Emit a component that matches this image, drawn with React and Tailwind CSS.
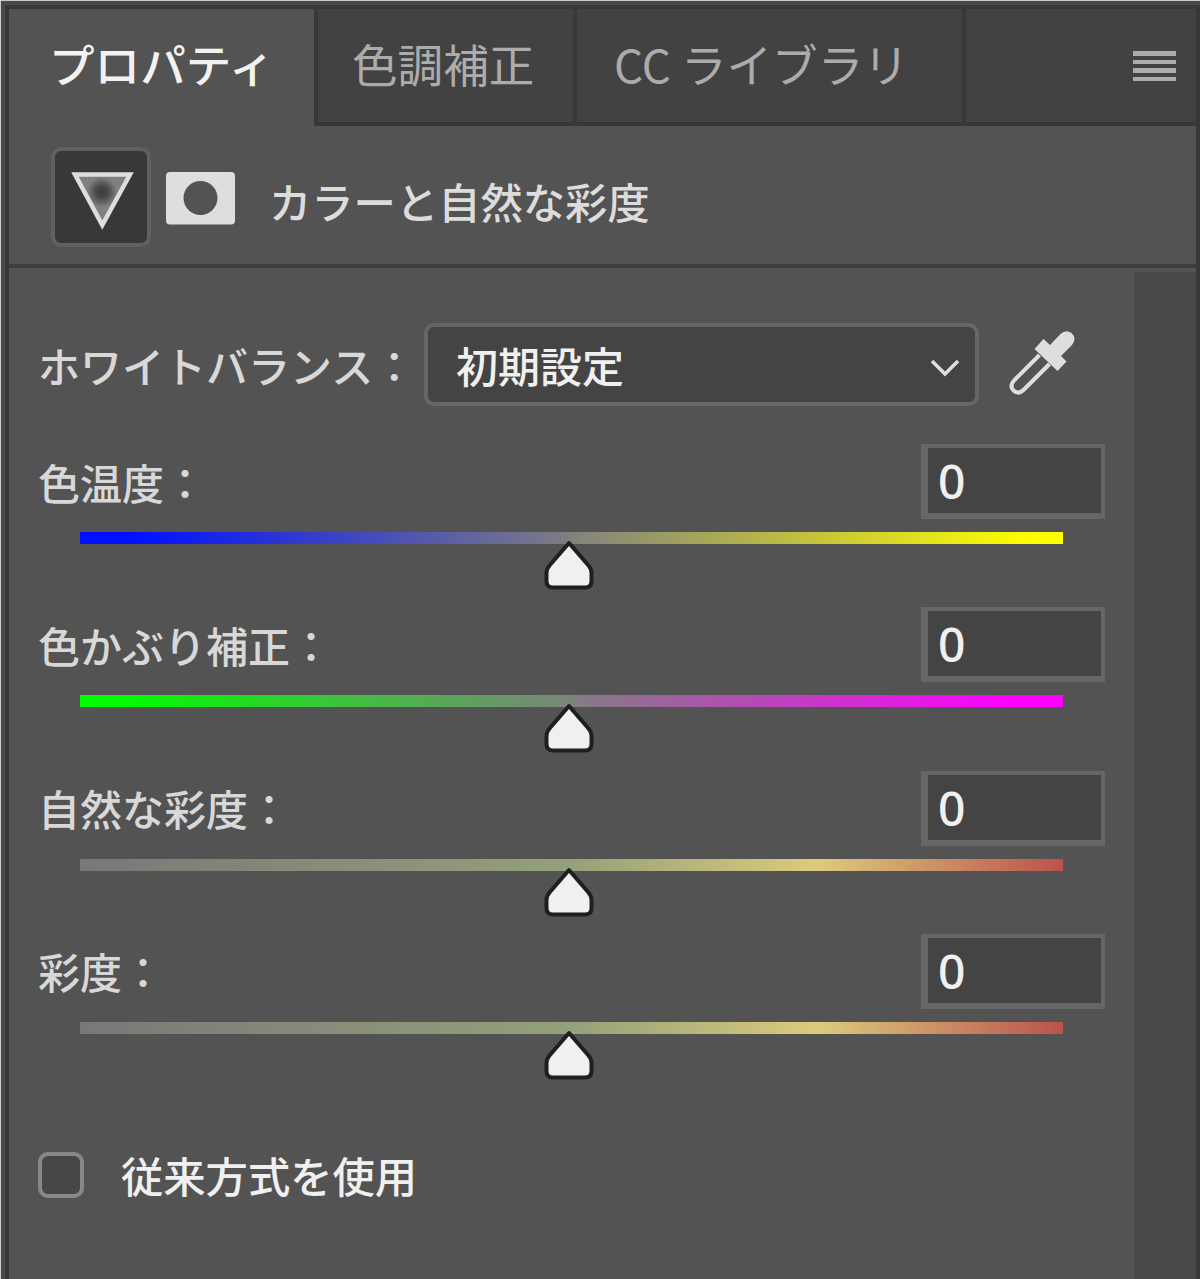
const tabText = "block whitespace-nowrap text-[45.6px] leading-[60px] tracking-normal";

const sliders = [
  { label: "色温度：", track: "bg-[linear-gradient(90deg,#0010ff_0%,#0010ff_5%,#7b7b85_49%,#85857b_51%,#ffff00_97%,#ffff00_100%)]" },
  { label: "色かぶり補正：", track: "bg-[linear-gradient(90deg,#00ff00_0%,#04fa04_5%,#7b857b_50%,#857b85_51%,#ff00ff_95%,#ff00ff_100%)]" },
  { label: "自然な彩度：", track: "bg-[linear-gradient(90deg,#787878_0%,#95a17a_50%,#dccb7c_75%,#bb524c_100%)]" },
  { label: "彩度：", track: "bg-[linear-gradient(90deg,#787878_0%,#95a17a_50%,#dccb7c_75%,#bb524c_100%)]" },
];

function Handle() {
  return (
    <svg className="absolute left-[463px] top-[6px]" width="52" height="54" viewBox="0 0 52 54">
      <path
        d="M26 5 L45.5 27.5 Q48.500 31 48.500 35 V43 Q48.500 49.500 42 49.500 H10 Q3.500 49.500 3.500 43 V35 Q3.500 31 6.500 27.500 Z"
        fill="#f0f0f0" stroke="#1f1f1f" strokeWidth="4" strokeLinejoin="round"
      />
    </svg>
  );
}

function SliderRow({ label, track }) {
  return (
    <div className="h-[163.3px]">
      <div className="flex h-[75px] items-center justify-between">
        <span className="whitespace-nowrap text-[42px] leading-[60px] font-medium text-[#d8d8d8]">{label}</span>
        <div className="mr-[29px] h-[75px] w-[184px] border-t-[4px] border-r-[4px] border-b-[6px] border-l-[7px] border-[#666] bg-[#444] pl-[10px]">
          <span className="block font-['Noto_Sans'] text-[48px] leading-[66px] font-medium text-[#f0f0f0]">0</span>
        </div>
      </div>
      <div className={`relative ml-[42px] mt-[13px] h-[12px] w-[983px] ${track}`}>
        <Handle />
      </div>
    </div>
  );
}

export default function App() {
  return (
    <div lang="ja" className="h-[1279px] w-[1200px] overflow-hidden border-l border-t border-[#c9cdca] font-['Noto_Sans_CJK_JP',sans-serif]">
      <div className="h-full border-l-[4px] border-t-[4px] border-[#474a48]">
        <div className="flex h-full flex-col border-l-[4px] border-r-[4px] border-t-[4px] border-[#383838] bg-[#535353]">
          <div className="flex h-[117px] shrink-0">
            <div className="w-[305px] pl-[40px] pt-[24px] text-[#f2f2f2]">
              <span className={`${tabText} font-medium`}>プロパティ</span>
            </div>
            <div className="flex flex-1 border-b-[4px] border-l-[4px] border-[#383838] bg-[#424242] text-[#acacac]">
              <div className="w-[259px] border-r-[4px] border-[#383838] pl-[34px] pt-[24px]">
                <span className={tabText}>色調補正</span>
              </div>
              <div className="w-[389px] border-r-[4px] border-[#383838] pl-[37px] pt-[24px]">
                <span className={tabText}>CC ライブラリ</span>
              </div>
              <div className="flex flex-1 justify-end pr-[20px] pt-[42px]">
                <div className="flex h-[30px] w-[43px] flex-col justify-between">
                  <i className="h-[4.500px] bg-[#acacac]" />
                  <i className="h-[4.500px] bg-[#acacac]" />
                  <i className="h-[4.500px] bg-[#acacac]" />
                  <i className="h-[4.500px] bg-[#acacac]" />
                </div>
              </div>
            </div>
          </div>

          <div className="flex h-[142px] shrink-0 items-start border-b-[4px] border-[#3d3d3d] pl-[42px] pt-[21px]">
            <div className="h-[100px] w-[100px] rounded-[10px] border-[4px] border-[#606060] bg-[#383838]">
              <svg width="92" height="92" viewBox="0 0 92 92">
                <defs>
                  <radialGradient id="spot" gradientUnits="userSpaceOnUse" cx="47" cy="41" r="15">
                    <stop offset="0" stopColor="#3c3c3c" />
                    <stop offset=".4" stopColor="#484848" />
                    <stop offset="1" stopColor="#808080" />
                  </radialGradient>
                </defs>
                <path d="M20 23.500 H75 L47.300 74 Z" fill="url(#spot)" stroke="#dedede" strokeWidth="4.500" />
              </svg>
            </div>
            <svg className="ml-[15px] mt-[25px]" width="69" height="53" viewBox="0 0 69 53">
              <rect width="69" height="52.500" rx="4" fill="#dedede" />
              <circle cx="34.500" cy="26" r="17" fill="#535353" />
            </svg>
            <span className="ml-[34px] mt-[24px] whitespace-nowrap text-[42.300px] leading-[60px] font-medium text-[#dcdcdc]">カラーと自然な彩度</span>
          </div>

          <div className="flex min-h-0 flex-1">
            <div className="w-[1125px] pl-[29px] pt-[55px]">
              <div className="flex h-[83px] items-center">
                <span className="w-[386px] shrink-0 whitespace-nowrap text-[42px] leading-[60px] font-medium text-[#d8d8d8]">ホワイトバランス：</span>
                <div className="flex h-[83px] w-[555px] shrink-0 items-center justify-between rounded-[10px] border-[4px] border-[#666] bg-[#444] pl-[28px] pr-[15px]">
                  <span className="text-[42px] leading-[60px] font-medium text-[#f0f0f0]">初期設定</span>
                  <svg className="mt-[7px]" width="30" height="20" viewBox="0 0 30 20" fill="none" stroke="#dedede" strokeWidth="3.600">
                    <path d="M2 3 L15 16 L28 3" />
                  </svg>
                </div>
                <svg className="ml-[27px] shrink-0" width="72" height="72" viewBox="0 0 72 72">
                  <path d="M33.500 26 L8.500 51 Q3 57 7.500 61.500 Q12.500 66 18 60.500 L43.500 35" fill="none" stroke="#dedede" strokeWidth="4" />
                  <path d="M37.500 10 L44 16 L54.500 5 Q60 0 65.500 4 Q71 9 66 16 L55 27 L60.500 32.500 L51.500 42 L28.500 20 Z" fill="#dedede" />
                </svg>
              </div>
              <div className="pt-[38px]">
                {sliders.map((s) => <SliderRow key={s.label} {...s} />)}
              </div>
              <div className="mt-[33px] flex items-center">
                <div className="mt-[14px] h-[46px] w-[46px] rounded-[10px] border-[4px] border-[#888] bg-[#474747]" />
                <span className="ml-[37px] mt-[15px] text-[42.300px] leading-[60px] font-medium text-[#f0f0f0]">従来方式を使用</span>
              </div>
            </div>
            <div className="mt-[4px] flex-1 bg-[#494949]" />
          </div>
        </div>
      </div>
    </div>
  );
}
